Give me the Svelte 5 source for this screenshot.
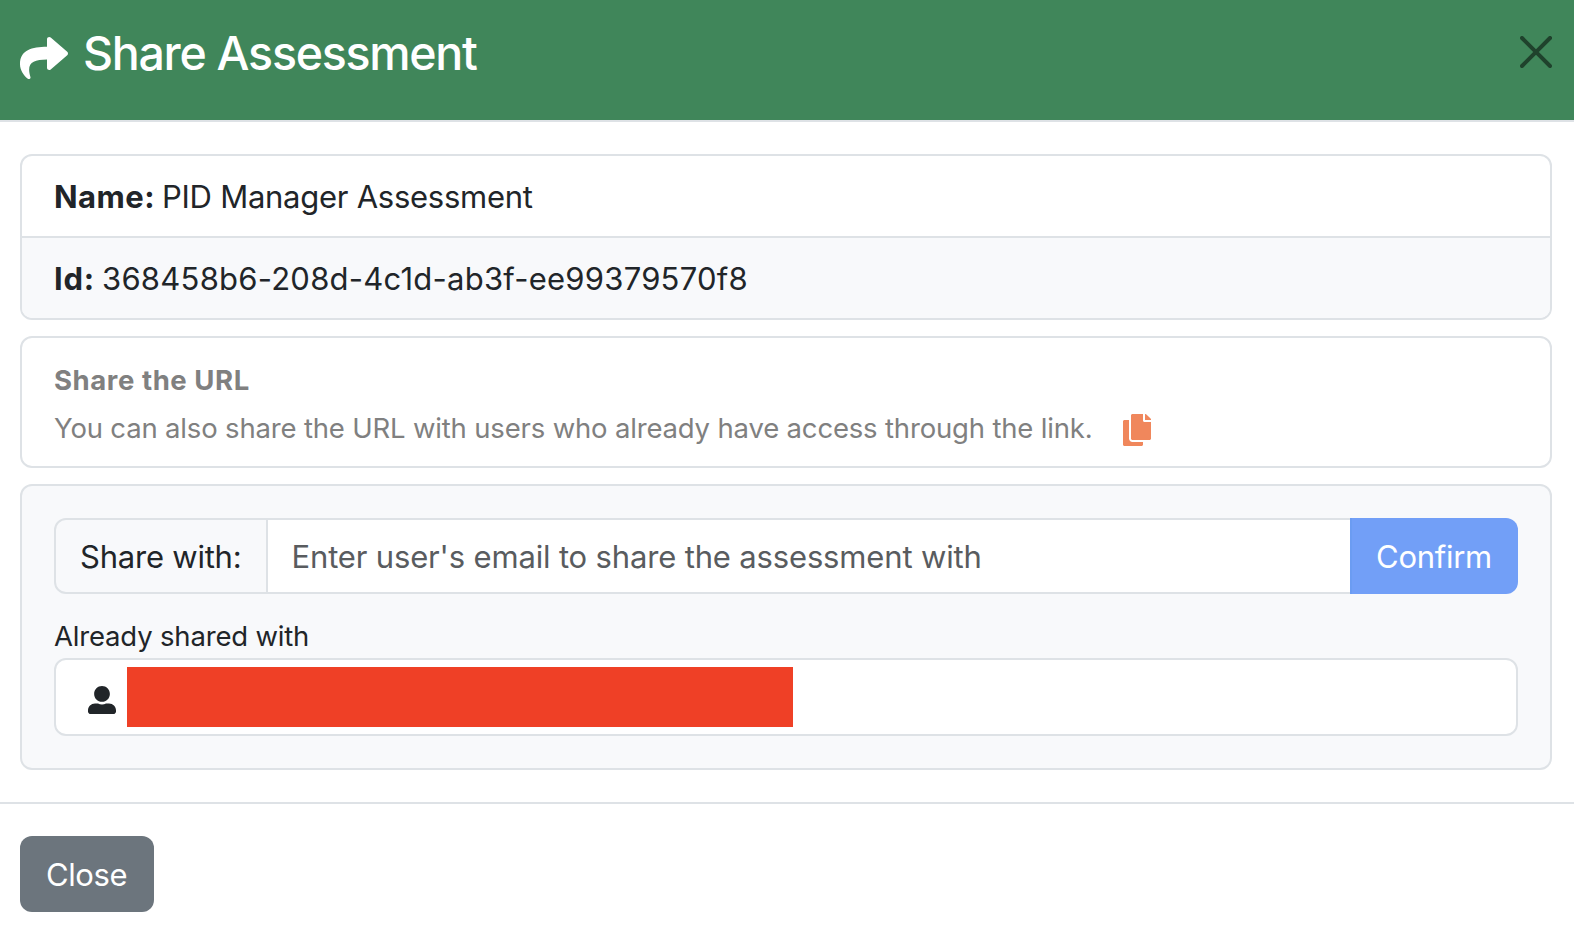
<script>
  const assessment = {
    name: 'PID Manager Assessment',
    id: '368458b6-208d-4c1d-ab3f-ee99379570f8'
  };
</script>

<div class="modal">
  <header class="modal-header">
    <svg class="share-icon" viewBox="0 0 512 512" fill="currentColor" aria-hidden="true">
      <path d="M503.691 189.836L327.687 37.851C312.281 24.546 288 35.347 288 56.015v80.053C127.371 137.907 0 170.1 0 322.326c0 61.441 39.581 122.309 83.333 154.132 13.653 9.931 33.111-2.533 28.077-18.631C66.066 312.814 132.917 274.316 288 272.085V360c0 20.7 24.3 31.453 39.687 18.164l176.004-152c11.071-9.562 11.086-26.753 0-36.328z" />
    </svg>
    <h1>Share Assessment</h1>
    <button class="dismiss" aria-label="Close dialog">
      <svg viewBox="0 0 16 16">
        <path d="M.293.293a1 1 0 0 1 1.414 0L8 6.586 14.293.293a1 1 0 1 1 1.414 1.414L9.414 8l6.293 6.293a1 1 0 0 1-1.414 1.414L8 9.414l-6.293 6.293a1 1 0 0 1-1.414-1.414L6.586 8 .293 1.707a1 1 0 0 1 0-1.414z" />
      </svg>
    </button>
  </header>

  <main class="modal-body">
    <section class="box details">
      <div class="row"><strong class="name-label">Name:</strong><span class="name">{assessment.name}</span></div>
      <div class="row tinted"><strong class="id-label">Id:</strong><span class="id">{assessment.id}</span></div>
    </section>

    <section class="box url">
      <h2>Share the URL</h2>
      <div class="url-line">
        <span>You can also share the URL with users who already have access through the link.</span>
        <svg class="copy-icon" viewBox="0 0 448 512" fill="currentColor" aria-hidden="true">
          <path d="M320 448v40c0 13.255-10.745 24-24 24H24c-13.255 0-24-10.745-24-24V120c0-13.255 10.745-24 24-24h72v296c0 30.879 25.121 56 56 56h168zm0-344V0H152c-13.255 0-24 10.745-24 24v368c0 13.255 10.745 24 24 24h272c13.255 0 24-10.745 24-24V128H344c-13.2 0-24-10.8-24-24zm120.971-31.029L375.029 7.029A24 24 0 0 0 358.059 0H352v96h96v-6.059a24 24 0 0 0-7.029-16.97z" />
        </svg>
      </div>
    </section>

    <section class="box sharing">
      <div class="input-group">
        <span class="addon">Share with:</span>
        <input type="text" placeholder="Enter user's email to share the assessment with" />
        <button class="confirm" disabled>Confirm</button>
      </div>
      <p class="shared-label">Already shared with</p>
      <div class="shared-user">
        <svg class="user-icon" viewBox="0 0 512 512" fill="currentColor" aria-hidden="true">
          <path d="M256 288c79.5 0 144-64.5 144-144S335.5 0 256 0 112 64.5 112 144s64.5 144 144 144zm128 32h-55.1c-22.2 10.2-46.9 16-72.9 16s-50.6-5.8-72.9-16H128c-70.7 0-128 57.3-128 128v16c0 26.5 21.5 48 48 48h416c26.5 0 48-21.5 48-48v-16c0-70.7-57.3-128-128-128z" />
        </svg>
        <span class="redacted"></span>
      </div>
    </section>
  </main>

  <footer class="modal-footer">
    <button class="close">Close</button>
  </footer>
</div>

<style>
  :global(body) {
    background: #fff;
  }

  .modal,
  .modal * {
    box-sizing: border-box;
  }

  .modal {
    height: 932px;
    overflow: hidden;
    font-family: Inter, 'Liberation Sans', sans-serif;
    font-size: 31px;
    color: #212529;
    background: #fff;
  }

  h1,
  h2,
  p {
    margin: 0;
  }

  svg {
    display: block;
    flex: none;
  }

  button,
  input {
    margin: 0;
    font: inherit;
  }

  .modal-header {
    display: flex;
    align-items: flex-start;
    height: 122px;
    padding: 24px 22px 0 20px;
    border-bottom: 2px solid #dee2e6;
    background: #40865a;
    color: #fff;
  }

  .share-icon {
    width: 48px;
    height: 48px;
    margin-top: 10px;
  }

  h1 {
    margin-left: 15px;
    font-size: 46.5px;
    font-weight: 500;
    line-height: 58px;
    letter-spacing: -1.27px;
    white-space: nowrap;
  }

  .dismiss {
    margin: 12px 0 0 auto;
    padding: 0;
    border: 0;
    background: none;
    opacity: 0.5;
  }

  .dismiss svg {
    width: 32px;
    height: 32px;
  }

  .modal-body {
    display: flex;
    flex-direction: column;
    gap: 16px;
    padding: 32px 22px 32px 20px;
  }

  .box {
    border: 2px solid #dee2e6;
    border-radius: 12px;
    overflow: hidden;
  }

  .row {
    display: flex;
    gap: 7px;
    height: 80px;
    padding: 1px 32px 0;
    line-height: 80px;
    white-space: nowrap;
  }

  .tinted {
    height: 82px;
    border-top: 2px solid #dee2e6;
    background: #f8f9fb;
  }

  .name-label {
    letter-spacing: 0.45px;
  }

  .name {
    letter-spacing: -0.26px;
  }

  .id-label {
    letter-spacing: 0.8px;
  }

  .id {
    letter-spacing: 0.244px;
  }

  .url {
    height: 132px;
    padding: 20px 32px 0;
    font-size: 27.5px;
    color: #808080;
  }

  h2 {
    font-size: 27.5px;
    font-weight: 700;
    line-height: 44px;
    letter-spacing: 0.57px;
  }

  .url-line {
    display: flex;
    align-items: center;
    gap: 31px;
    height: 52px;
    letter-spacing: -0.173px;
    white-space: nowrap;
  }

  .copy-icon {
    width: 28px;
    height: 32px;
    margin-top: 4px;
    color: #f0875c;
  }

  .sharing {
    height: 286px;
    padding: 32px;
    background: #f8f9fb;
  }

  .input-group {
    display: flex;
    height: 76px;
  }

  .addon {
    width: 214px;
    padding-left: 24px;
    border: 2px solid #dee2e6;
    border-radius: 12px 0 0 12px;
    line-height: 73px;
    letter-spacing: -0.22px;
    white-space: nowrap;
  }

  input {
    flex: 1;
    min-width: 0;
    padding: 0 24px 0 23.5px;
    border: solid #dee2e6;
    border-width: 2px 0;
    background: #fff;
    letter-spacing: -0.158px;
    outline: none;
  }

  input::placeholder {
    color: #595c5f;
    opacity: 1;
  }

  .confirm {
    width: 168px;
    padding: 1px 2px 0 0;
    border: 0;
    border-left: 2px solid #6b9cf2;
    border-radius: 0 12px 12px 0;
    background: #729ff7;
    color: #fff;
    letter-spacing: -0.28px;
  }

  .shared-label {
    height: 64px;
    padding-top: 20px;
    font-size: 27.5px;
    line-height: 44px;
    letter-spacing: -0.18px;
  }

  .shared-user {
    display: flex;
    height: 78px;
    padding: 7px 32px;
    border: 2px solid #dee2e6;
    border-radius: 12px;
    background: #fff;
  }

  .user-icon {
    width: 28px;
    height: 28px;
    margin-top: 19px;
  }

  .redacted {
    width: 666px;
    height: 60px;
    margin-left: 11px;
    background: #ef4026;
  }

  .modal-footer {
    padding: 32px 20px;
    border-top: 2px solid #dee2e6;
  }

  .close {
    display: block;
    width: 134px;
    height: 76px;
    padding: 1px 1px 0 0;
    border: 0;
    border-radius: 12px;
    background: #6c757d;
    color: #fff;
    letter-spacing: -0.4px;
  }
</style>
